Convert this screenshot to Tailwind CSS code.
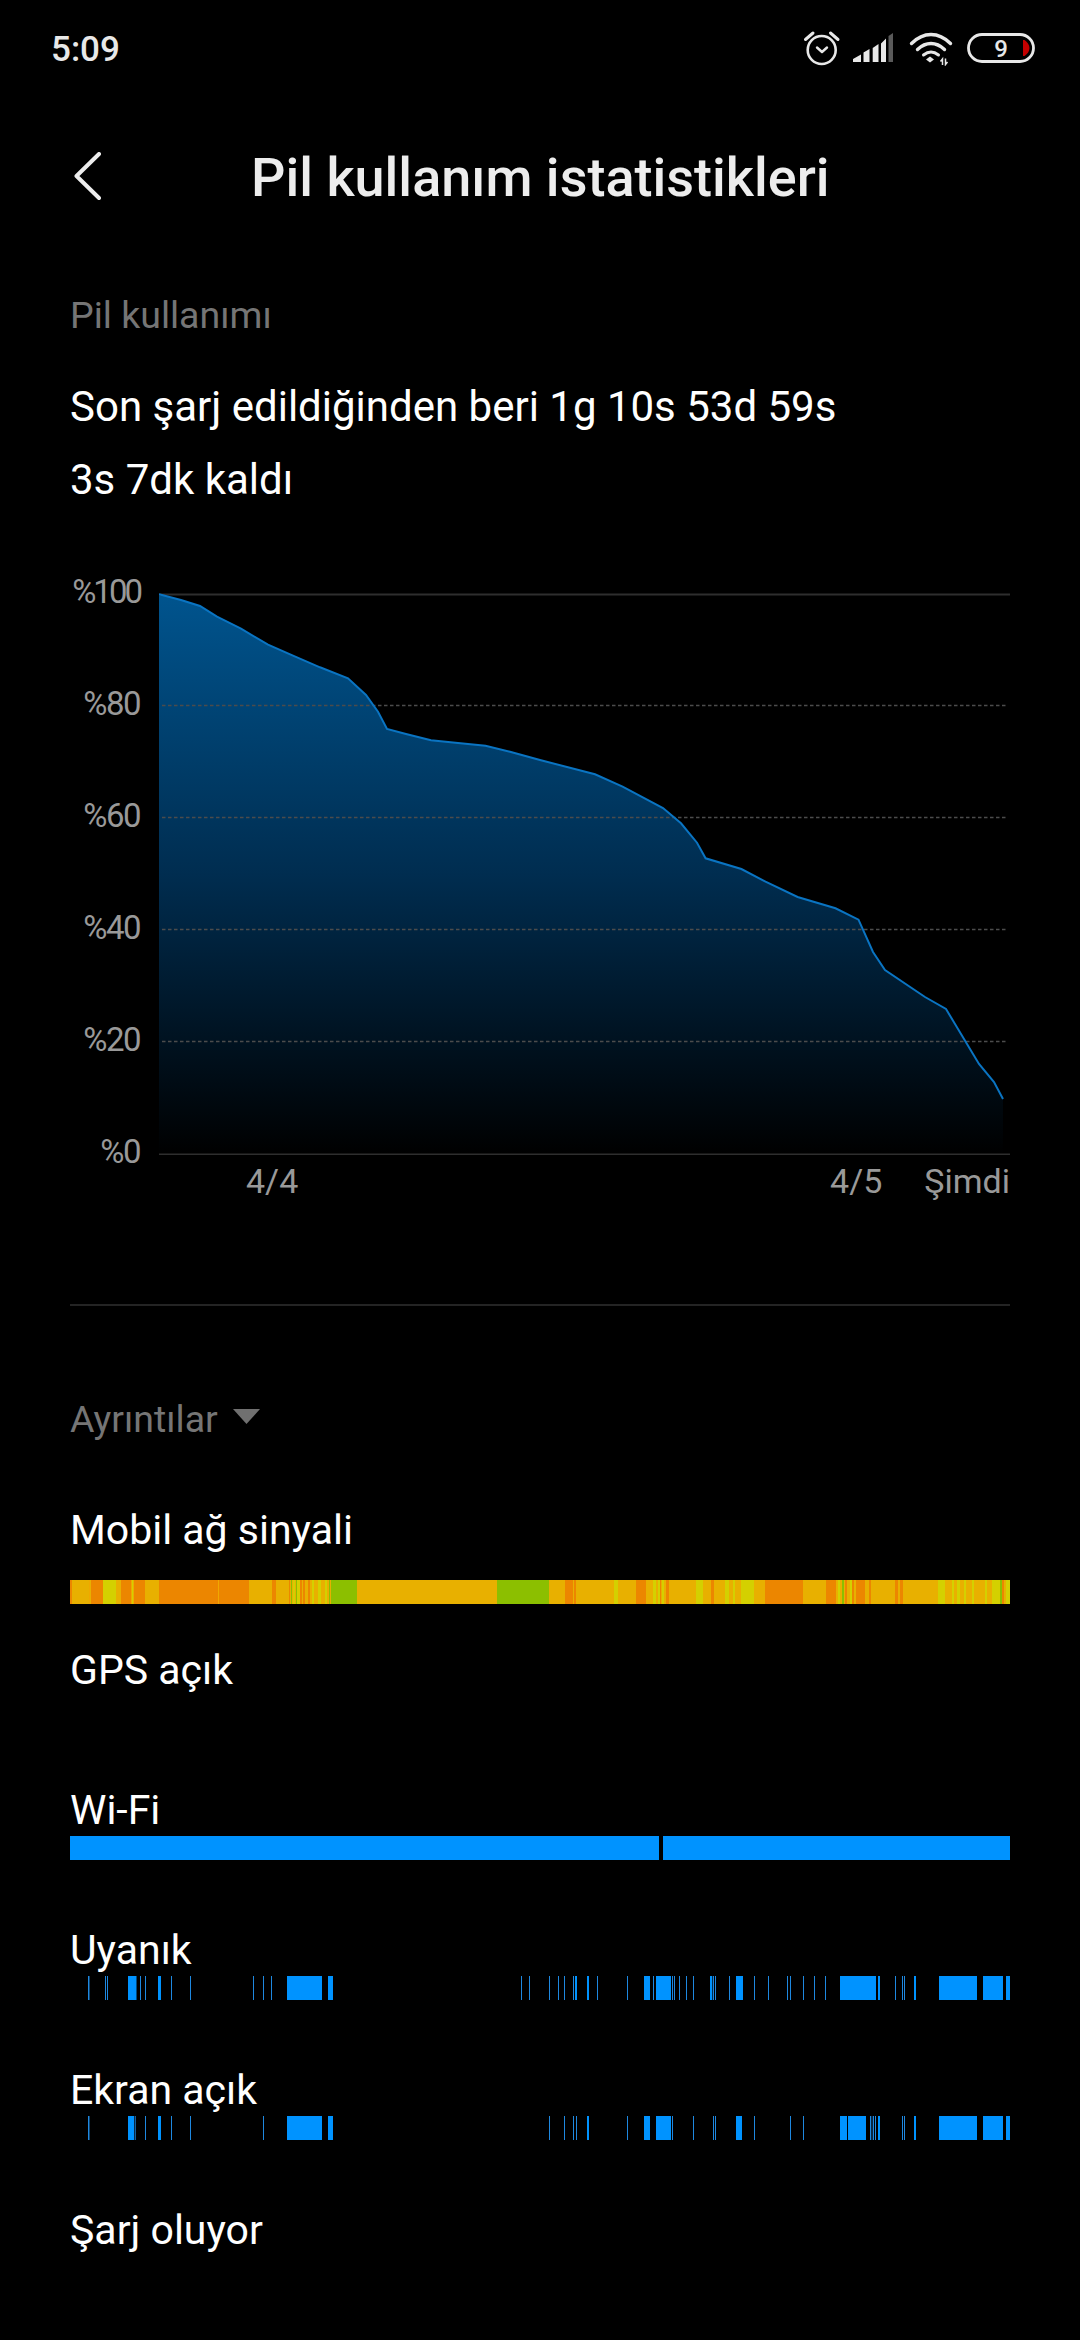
<!DOCTYPE html>
<html lang="tr">
<head>
<meta charset="utf-8">
<script src="https://cdn.jsdelivr.net/npm/@tailwindcss/browser@4"></script>
<title>Pil kullanım istatistikleri</title>
</head>
<body class="bg-black">
<div class="w-[1080px] h-[2340px] overflow-hidden bg-black text-white font-['Roboto',sans-serif]">
  <!-- status bar -->
  <div class="h-[96px] flex items-center pl-[51px] text-[#e8e8e8]">
    <span class="pt-[2px] text-[35px] font-medium leading-none">5:09</span>
    <div class="ml-auto flex items-center">
      <svg class="w-[240px] h-[36px] mr-[40px]" viewBox="800 30 240 36" fill="none" stroke="#e8e8e8">
        <circle cx="821.7" cy="50" r="14" stroke-width="2.6"/>
        <path d="M805.500 39.500l7.500-6.500M838 39.500l-7.500-6.500" stroke-width="3" stroke-linecap="round"/>
        <path d="M817 47.500l5 4.500 5-4.500" stroke-width="2.400" stroke-linecap="round" stroke-linejoin="round"/>
        <path d="M853 62v-3l8-4.500v7.500zM863.500 62v-9.500l6-3.500v13zM872.700 62v-14l5.800-4v18zM881 62v-18.500l5-5v23.500z" fill="#e8e8e8" stroke="none"/>
        <path d="M888.500 62v-26l4.500-3v29z" fill="#5a5a5a" stroke="none"/>
        <path d="M911.500 43.500c12-12 27-12 39 0M917.500 49.500c8.500-8 18.500-8 27 0" stroke-width="3.400" stroke-linecap="round"/>
        <path d="M923.500 55c5-4 10-4 15 0" stroke-width="3" stroke-linecap="round"/>
        <path d="M926 59.500l4-3 4 3-4 3z" fill="#e8e8e8" stroke="none"/>
        <path d="M942.500 65v-6l-2 2.500M945.500 58.500v6l2-2.500" stroke-width="1.500"/>
        <rect x="968.500" y="34.500" width="65" height="27" rx="13.500" stroke-width="2.800"/>
        <path d="M1023 40h1.500c3 2 5 5 5 8s-2 6-5 8h-1.500z" fill="#c40000" stroke="none"/>
        <text x="1001" y="56.500" text-anchor="middle" fill="#e8e8e8" stroke="none" font-size="24" font-weight="500">9</text>
      </svg>
    </div>
  </div>

  <!-- header -->
  <div class="h-[162px] flex items-center">
    <svg class="ml-[73px] w-[30px] h-[50px]" viewBox="73 152 30 50" fill="none" stroke="#ededed" stroke-width="4" stroke-linecap="round" stroke-linejoin="round"><path d="M99 154L76.500 176 99 198"/></svg>
    <h1 class="ml-[148px] pt-[2px] text-[54px] font-medium leading-none text-[#ededed]">Pil kullanım istatistikleri</h1>
  </div>

  <!-- summary -->
  <div class="mt-[35px] px-[70px]">
    <div class="text-[37.500px] leading-[44px] text-[#757575]">Pil kullanımı</div>
    <div class="mt-[33px] text-[42px] leading-[73px]">
      <div>Son şarj edildiğinden beri 1g 10s 53d 59s</div>
      <div>3s 7dk kaldı</div>
    </div>
  </div>

  <!-- chart -->
  <div class="mt-[19px] flex h-[672px]">
    <div class="w-[159px] pt-[1px] pr-[19px] text-right text-[33px] tracking-[-1.500px] leading-[112px] text-[#999999]">
      <div class="h-[112px] tracking-[-3px]">%100</div>
      <div class="h-[112px]">%80</div>
      <div class="h-[112px]">%60</div>
      <div class="h-[112px]">%40</div>
      <div class="h-[112px]">%20</div>
      <div class="h-[111px]">%0</div>
    </div>
    <div class="w-[851px]">
      <svg class="block w-[851px] h-[620px]" viewBox="159 535 851 620">
        <defs>
          <linearGradient id="fillGrad" x1="0" y1="594" x2="0" y2="1154" gradientUnits="userSpaceOnUse">
            <stop offset="0" stop-color="#00548e"/>
            <stop offset="0.5" stop-color="#002d50"/>
            <stop offset="0.8" stop-color="#001220"/>
            <stop offset="1" stop-color="#000000"/>
          </linearGradient>
        </defs>
        <path d="M159 594.300L181 600 200 606 217 616.700 241 628.700 268 644.700 293 655.700 320 667.300 348 678.300 366 695 378 711.700 387 729 406 734 431 740.300 458 743 485.500 745.700 510 751.700 540 760 595 774.300 622.600 786.700 663 808 681 823.300 697 842.700 705.600 858.300 741.400 869 765.500 881.700 797.600 897 835.500 908.300 858.500 919.700 873 952 885 970 925 997 946 1009 979 1064 994 1082 1003 1099V1154H159Z" fill="url(#fillGrad)"/>
        <path d="M159 594.500H1010M159 1154.500H1010" stroke="#2e2e2e" stroke-width="2"/>
        <path d="M162 705.500H1008M162 817.500H1008M162 929.500H1008M162 1041.500H1008" stroke="#4c4c4c" stroke-width="1.500" stroke-dasharray="3.500 2.500"/>
        <path d="M159 594.300L181 600 200 606 217 616.700 241 628.700 268 644.700 293 655.700 320 667.300 348 678.300 366 695 378 711.700 387 729 406 734 431 740.300 458 743 485.500 745.700 510 751.700 540 760 595 774.300 622.600 786.700 663 808 681 823.300 697 842.700 705.600 858.300 741.400 869 765.500 881.700 797.600 897 835.500 908.300 858.500 919.700 873 952 885 970 925 997 946 1009 979 1064 994 1082 1003 1099" fill="none" stroke="#0a74c2" stroke-width="2"/>
      </svg>
      <div class="flex text-[34px] leading-[52px] text-[#999999]">
        <span class="ml-[87px]">4/4</span>
        <span class="ml-auto mr-[42px]">4/5</span>
        <span>Şimdi</span>
      </div>
    </div>
  </div>

  <div class="mt-[97px] mx-[70px] h-[2px] bg-[#242424]"></div>

  <!-- details -->
  <div class="mt-[91px] px-[70px] flex items-center text-[37.500px] leading-[44px] text-[#757575]">
    <span>Ayrıntılar</span>
    <svg class="ml-[15px] w-[27px] h-[15px] mb-[6px]" viewBox="0 0 27 15"><path d="M0 0h27L13.500 15z" fill="#707070"/></svg>
  </div>

  <div class="mt-[65px] px-[70px] text-[41px] leading-[48px]">
    <div class="h-[140px]">
      <div>Mobil ağ sinyali</div>
      <svg class="block mt-[26px] w-[940px] h-[24px]" viewBox="70 0 940 24" preserveAspectRatio="none">
        <rect x="70" y="0" width="940" height="24" fill="#e8b000"/>
        <path fill="#ec8600" d="M70 0h2v24h-2zM91 0h12v24h-12zM121 0h10v24h-10zM134 0h11v24h-11zM159 0h59v24h-59zM219 0h30v24h-30zM272 0h4v24h-4zM289 0h1v24h-1zM300 0h2v24h-2zM303 0h2v24h-2zM308 0h2v24h-2zM565 0h8v24h-8zM574 0h2v24h-2zM636 0h10v24h-10zM660 0h1v24h-1zM666 0h3v24h-3zM711 0h3v24h-3zM765 0h38v24h-38zM826 0h10v24h-10zM845 0h2v24h-2zM852 0h2v24h-2zM856 0h9v24h-9zM869 0h2v24h-2zM895 0h3v24h-3zM900 0h3v24h-3zM1002 0h2v24h-2z"/>
        <path fill="#d4d000" d="M103 0h13v24h-13zM132 0h1v24h-1zM293 0h2v24h-2zM297 0h3v24h-3zM312 0h2v24h-2zM318 0h3v24h-3zM325 0h2v24h-2zM614 0h4v24h-4zM653 0h3v24h-3zM658 0h2v24h-2zM662 0h2v24h-2zM696 0h7v24h-7zM725 0h4v24h-4zM733 0h2v24h-2zM741 0h13v24h-13zM838 0h2v24h-2zM850 0h2v24h-2zM938 0h7v24h-7zM952 0h2v24h-2zM957 0h3v24h-3zM964 0h2v24h-2zM972 0h2v24h-2zM985 0h2v24h-2zM992 0h8v24h-8zM1006 0h4v24h-4z"/>
        <path fill="#8cbf00" d="M291 0h1v24h-1zM296 0h1v24h-1zM329 0h1v24h-1zM331 0h2v24h-2zM333 0h24v24h-24zM497 0h52v24h-52zM842 0h2v24h-2zM1000 0h2v24h-2z"/>
        <path fill="#f0a800" d="M89 0h1v24h-1zM218 0h1v24h-1zM131 0h1v24h-1z"/>
      </svg>
    </div>
    <div class="h-[140px]">GPS açık</div>
    <div class="h-[140px]">
      <div>Wi-Fi</div>
      <div class="mt-[2px] flex h-[24px]">
        <div class="w-[589px] bg-[#0093ff]"></div>
        <div class="ml-[4px] flex-1 bg-[#0093ff]"></div>
      </div>
    </div>
    <div class="h-[140px]">
      <div>Uyanık</div>
      <svg class="block mt-[2px] w-[940px] h-[24px]" viewBox="70 0 940 24">
        <path fill="#1e88e0" d="M88 0h1.500v24h-1.500zM105 0h1v24h-1zM107 0h1v24h-1zM140 0h1v24h-1zM145 0h1v24h-1zM171 0h1v24h-1zM190 0h1v24h-1zM253 0h1v24h-1zM263 0h1v24h-1zM271 0h1v24h-1zM521 0h1v24h-1zM529 0h1v24h-1zM549 0h1v24h-1zM558 0h1v24h-1zM564 0h1v24h-1zM573 0h1v24h-1zM597 0h1v24h-1zM627 0h1v24h-1zM653 0h1v24h-1zM672 0h1v24h-1zM674 0h1v24h-1zM679 0h1v24h-1zM686 0h1v24h-1zM693 0h1v24h-1zM713 0h1v24h-1zM715 0h1v24h-1zM729 0h1v24h-1zM754 0h1v24h-1zM768 0h1v24h-1zM787 0h1v24h-1zM790 0h1v24h-1zM803 0h1v24h-1zM814 0h1v24h-1zM825 0h1v24h-1zM895 0h1v24h-1zM902 0h1v24h-1zM904 0h1v24h-1z"/>
        <path fill="#0093ff" d="M128 0h8.500v24h-8.500zM158 0h3v24h-3zM287 0h35v24h-35zM328 0h5v24h-5zM575 0h2v24h-2zM587 0h2v24h-2zM644 0h6v24h-6zM656 0h15v24h-15zM710 0h2.300v24h-2.300zM736 0h7v24h-7zM840 0h36v24h-36zM878 0h2v24h-2zM914 0h2v24h-2zM939 0h38v24h-38zM983 0h20v24h-20zM1006 0h4v24h-4z"/>
      </svg>
    </div>
    <div class="h-[140px]">
      <div>Ekran açık</div>
      <svg class="block mt-[2px] w-[940px] h-[24px]" viewBox="70 0 940 24">
        <path fill="#1e88e0" d="M88 0h1.500v24h-1.500zM134.700 0h1v24h-1zM145 0h1v24h-1zM171 0h1v24h-1zM190 0h1v24h-1zM263 0h1v24h-1zM549 0h1v24h-1zM564 0h1v24h-1zM573 0h1v24h-1zM576 0h1v24h-1zM627 0h1v24h-1zM672 0h1v24h-1zM693 0h1v24h-1zM713 0h1v24h-1zM715 0h1v24h-1zM754 0h1v24h-1zM790 0h1v24h-1zM803 0h1v24h-1zM870 0h1.300v24h-1.300zM872.700 0h1.300v24h-1.300zM875 0h1v24h-1zM902 0h1v24h-1zM904 0h1v24h-1z"/>
        <path fill="#0093ff" d="M128 0h6v24h-6zM158 0h3v24h-3zM287 0h35v24h-35zM328 0h5v24h-5zM587 0h2v24h-2zM644 0h6v24h-6zM656 0h15v24h-15zM736 0h6v24h-6zM840 0h7v24h-7zM848 0h18v24h-18zM878 0h2v24h-2zM914 0h2v24h-2zM939 0h38v24h-38zM983 0h20v24h-20zM1006 0h4v24h-4z"/>
      </svg>
    </div>
    <div class="h-[140px]">Şarj oluyor</div>
  </div>
</div>
</body>
</html>
